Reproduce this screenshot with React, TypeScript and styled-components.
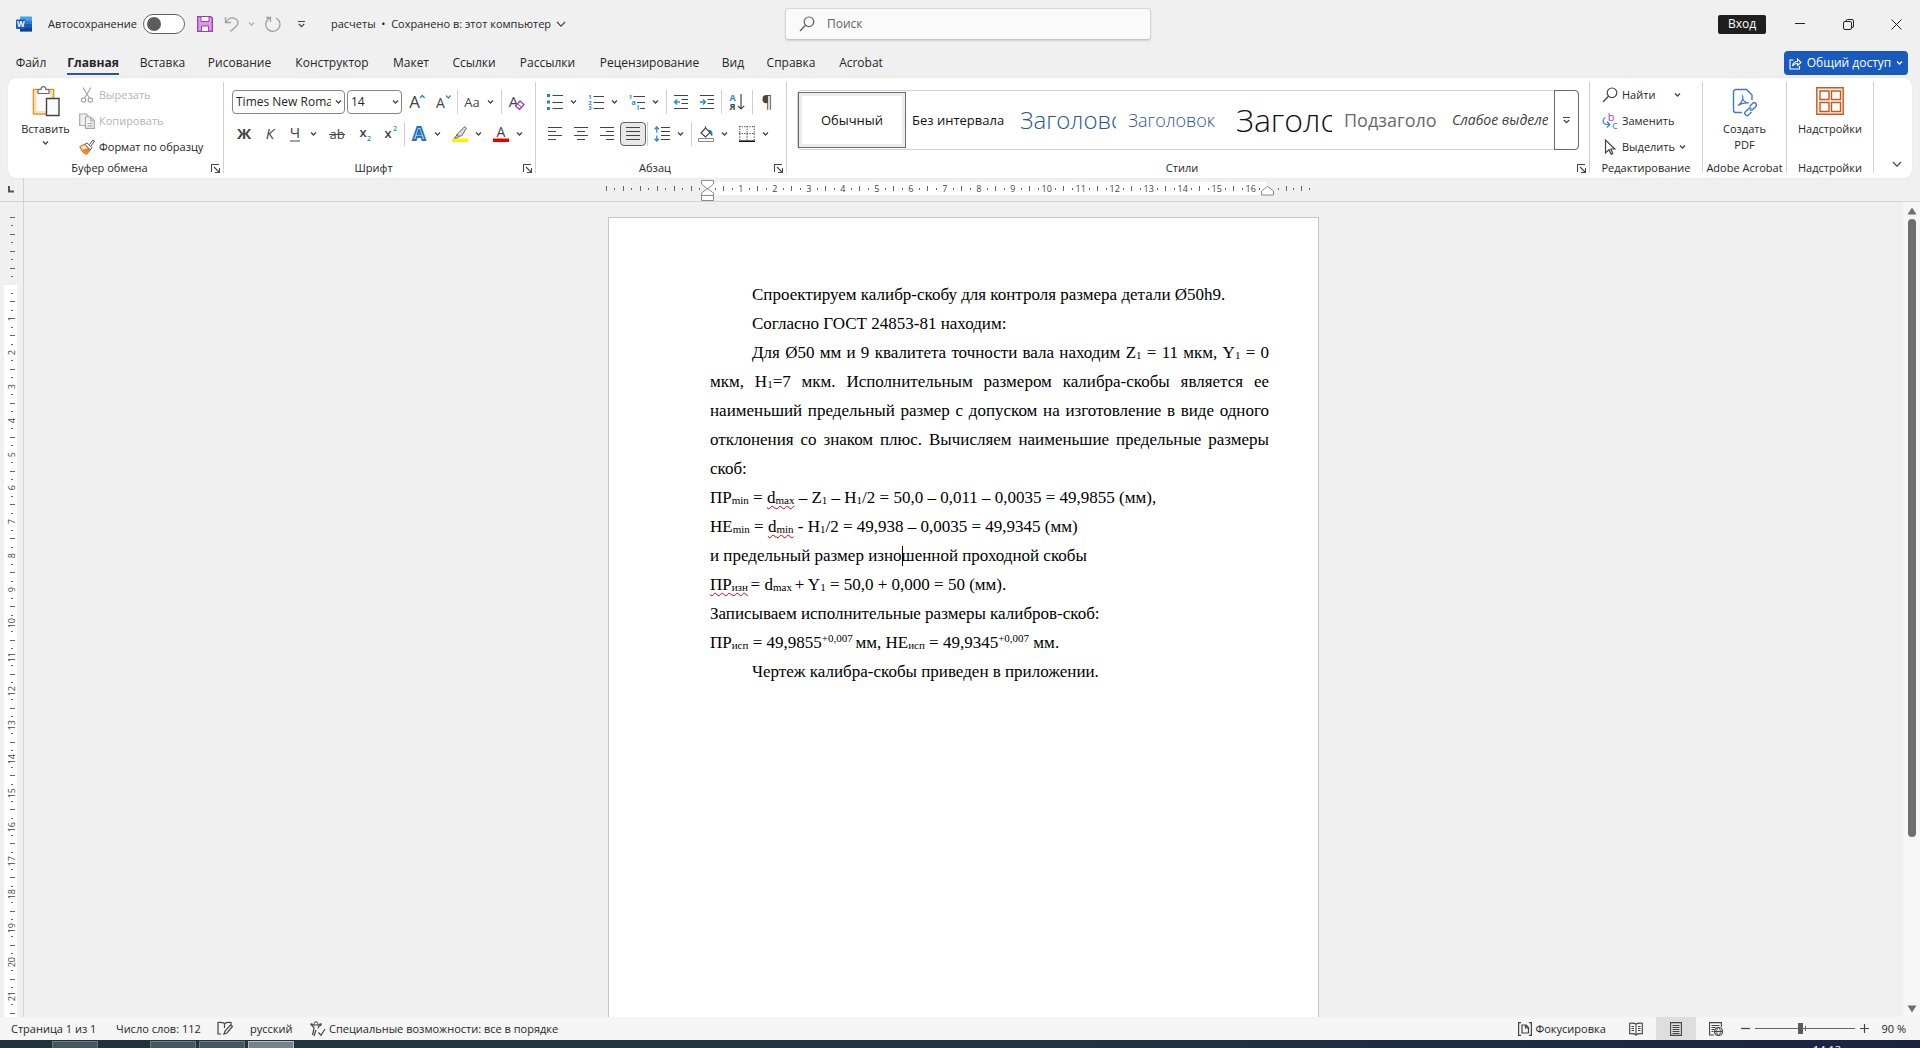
import React from "react";
import styled, { createGlobalStyle, css } from "styled-components";

const ui = `"Open Sans", "Noto Sans", sans-serif`;
const serif = `"Liberation Serif", "Times New Roman", serif`;
const ink = "#262626";
const line = "#444444";
const blue = "#2b88d8";

const Global = createGlobalStyle`
  *, *::before, *::after { box-sizing: border-box; }
  body { margin: 0; background: #f0f0f0; color: ${ink}; font-family: ${ui}; font-size: 12px; line-height: 16px; overflow: hidden; }
  button, input, select { font: inherit; color: inherit; }
  button { border: 0; background: none; padding: 0; }
`;

const Window = styled.div`
  height: 100vh;
  display: flex;
  flex-direction: column;
`;

/* ---------- title bar ---------- */
const TitleBar = styled.header`
  display: grid;
  grid-template-columns: 1fr 366px 1fr;
  height: 50px;
  flex: none;
  padding-left: 16px;
`;
const TitleSide = styled.div<{ $end?: boolean }>`
  display: flex;
  align-items: center;
  height: 48px;
  font-size: 11px;
  ${(p) => p.$end && css`justify-content: flex-end; font-size: 12px;`}
`;
const AutoSave = styled.label`
  display: flex;
  align-items: center;
  margin: 0 8px 0 16px;
  width: 137px;
  justify-content: space-between;
  white-space: nowrap;
`;
const Toggle = styled.input`
  appearance: none;
  flex: none;
  width: 42px;
  height: 20px;
  margin: 0;
  border: 1px solid #616161;
  border-radius: 10px;
  background: #fff;
  display: flex;
  align-items: center;
  padding-left: 3px;
  &::before { content: ""; width: 14px; height: 14px; border-radius: 50%; background: #5c5c5c; }
`;
const Quick = styled.button<{ $w?: number }>`
  width: ${(p) => p.$w ?? 24}px;
  height: 24px;
  display: flex;
  align-items: center;
  justify-content: center;
`;
const DocName = styled.button`
  display: flex;
  align-items: center;
  gap: 5px;
  margin-left: 18px;
  white-space: nowrap;
`;
const SearchBox = styled.label`
  display: flex;
  align-items: center;
  gap: 12px;
  height: 32px;
  margin-top: 8px;
  padding: 0 13px;
  background: #fafafa;
  border: 1px solid #d6d6d6;
  border-bottom-color: #c4c4c4;
  border-radius: 4px;
  box-shadow: 0 1px 2px rgba(0, 0, 0, 0.14);
`;
const SearchInput = styled.input`
  flex: 1;
  min-width: 0;
  border: 0;
  outline: 0;
  padding: 0;
  background: transparent;
  &::placeholder { color: #616161; opacity: 1; }
`;
const SignIn = styled.button`
  width: 48px;
  height: 19px;
  margin-right: 10px;
  background: #1f1f1f;
  color: #fff;
  border-radius: 2px;
`;
const WinButton = styled.button`
  width: 48px;
  height: 48px;
  display: flex;
  align-items: center;
  justify-content: center;
`;

/* ---------- tabs ---------- */
const TabRow = styled.nav`
  display: flex;
  flex: none;
  height: 28px;
  padding: 0 12px 0 5px;
`;
const Tab = styled.button<{ $w: number; $active?: boolean }>`
  width: ${(p) => p.$w}px;
  display: flex;
  justify-content: center;
  font-weight: ${(p) => (p.$active ? 700 : 400)};
  white-space: nowrap;
  span {
    height: 25px;
    padding-top: 5px;
    border-bottom: 2px solid ${(p) => (p.$active ? "#2b579a" : "transparent")};
  }
`;
const Share = styled.button`
  display: flex;
  align-items: center;
  justify-content: center;
  gap: 5px;
  width: 124px;
  height: 24px;
  margin: 1px 0 0 auto;
  border-radius: 4px;
  background: #185abd;
  color: #fff;
  white-space: nowrap;
`;

/* ---------- ribbon ---------- */
const Ribbon = styled.section`
  display: flex;
  flex: none;
  height: 100px;
  margin: 0 8px;
  background: #fff;
  border-radius: 8px;
  box-shadow: 0 0 1px rgba(0, 0, 0, 0.2);
`;
const Group = styled.div<{ $w?: number }>`
  ${(p) => (p.$w ? css`flex: 0 0 ${p.$w}px;` : css`flex: 1 1 0;`)}
  min-width: 0;
  display: flex;
  flex-direction: column;
  border-right: 1px solid;
  border-image: linear-gradient(transparent 5px, #d1d1d1 5px, #d1d1d1 94px, transparent 94px) 1;
`;
const Body = styled.div`
  height: 82px;
  display: flex;
  min-width: 0;
`;
const Foot = styled.div`
  display: flex;
  align-items: center;
  height: 16px;
  white-space: nowrap;
  font-size: 11px;
  span { flex: 1; text-align: center; }
`;
const Launcher = styled.button`
  width: 12px;
  height: 16px;
  display: flex;
  align-items: center;
`;
const Big = styled.button<{ $w: number; $lead?: number }>`
  width: ${(p) => p.$w}px;
  padding: 8px 0 0 ${(p) => p.$lead ?? 0}px;
  display: flex;
  flex-direction: column;
  align-items: center;
  gap: 3px;
  font-size: 11px;
`;
const BigIcon = styled.span`
  height: 32px;
  display: flex;
`;
const Stack = styled.div<{ $lead?: number }>`
  display: flex;
  flex-direction: column;
  padding: 4px 0 0 ${(p) => p.$lead ?? 0}px;
`;
const Small = styled.button<{ $off?: boolean }>`
  display: flex;
  align-items: center;
  gap: 4px;
  height: 26px;
  font-size: 11px;
  white-space: nowrap;
  color: ${(p) => (p.$off ? "#b5b5b5" : ink)};
`;
const SmallLabel = styled.span<{ $w?: number }>`
  text-align: left;
  ${(p) => p.$w && css`width: ${p.$w}px;`}
`;
const Rows = styled.div`
  display: flex;
  flex-direction: column;
  gap: 8px;
  padding: 12px 0 0 6px;
`;
const Row = styled.div<{ $inset?: boolean }>`
  display: flex;
  align-items: center;
  height: 24px;
  padding-left: ${(p) => (p.$inset ? 2 : 0)}px;
`;
const Combo = styled.label<{ $w: number }>`
  position: relative;
  width: ${(p) => p.$w}px;
  height: 24px;
  margin-right: 2px;
  select {
    appearance: none;
    width: 100%;
    height: 100%;
    padding: 0 13px 0 3px;
    border: 1px solid #868686;
    border-radius: 4px;
    background: #fff;
    text-overflow: clip;
  }
  svg { position: absolute; right: 3px; top: 9px; pointer-events: none; }
`;
const Tool = styled.button<{ $w: number; $on?: boolean }>`
  flex: none;
  width: ${(p) => p.$w}px;
  height: 24px;
  display: flex;
  align-items: center;
  justify-content: center;
  ${(p) => p.$on && css`background: #e8e8e8; border: 1px solid #616161; border-radius: 4px;`}
`;
const Split = styled.button`
  flex: none;
  width: 41px;
  height: 24px;
  display: flex;
  align-items: center;
  gap: 7px;
  padding-left: 5px;
`;
const Bar = styled.i`
  width: 1px;
  height: 24px;
  margin: 0 1px;
  background: #d1d1d1;
`;
const Gallery = styled.div`
  display: flex;
  flex: 1;
  min-width: 0;
  height: 60px;
  margin: 12px 10px 0;
  border: 1px solid #d1d1d1;
  border-radius: 4px;
`;
const StyleList = styled.div`
  flex: 1;
  min-width: 0;
  display: flex;
  align-items: center;
  overflow: hidden;
`;
const StyleItem = styled.button<{ $size: number; $color?: string; $on?: boolean; $light?: boolean; $italic?: boolean }>`
  flex: none;
  width: 108px;
  height: 56px;
  padding: 0 ${(p) => (p.$on ? 2 : 6)}px;
  font-size: ${(p) => p.$size}px;
  line-height: 40px;
  font-weight: ${(p) => (p.$light ? 300 : 400)};
  font-style: ${(p) => (p.$italic ? "italic" : "normal")};
  color: ${(p) => p.$color ?? "#111"};
  ${(p) => p.$on && css`border: 1px solid #6a6a6a; box-shadow: inset 0 0 0 3px #ececec;`}
  span {
    display: block;
    overflow: hidden;
    white-space: nowrap;
    text-align: ${(p) => (p.$on ? "center" : "left")};
  }
`;
const More = styled.button`
  width: 25px;
  margin: -1px;
  border: 1px solid #6a6a6a;
  border-radius: 0 4px 4px 0;
  display: flex;
  align-items: center;
  justify-content: center;
`;
const Collapse = styled.button`
  flex: none;
  width: 38px;
  display: flex;
  justify-content: center;
  padding: 83px 0 0 8px;
`;

/* ---------- rulers and canvas ---------- */
const RulerRow = styled.div`
  display: flex;
  flex: none;
  height: 24px;
  border-bottom: 1px solid #d4d4d4;
`;
const Corner = styled.div`
  width: 24px;
  border-right: 1px solid #d4d4d4;
  display: flex;
  padding: 8px 0 0 8px;
`;
const HRuler = styled.div`
  flex: 1;
  display: flex;
  justify-content: center;
  padding: 4px 29px 0 0;
  font-size: 9px;
  line-height: 13px;
  color: #444;
`;
const HSide = styled.div<{ $w: number; $pad: number }>`
  display: flex;
  width: ${(p) => p.$w}px;
  height: 13px;
  padding-right: ${(p) => p.$pad}px;
`;
const HMain = styled.div`
  position: relative;
  display: flex;
  width: 560px;
  height: 13px;
  padding: 0 4px;
  background: #fff;
`;
const HMark = styled.span`
  flex: 1 1 0;
  min-width: 0;
  display: flex;
  align-items: center;
  justify-content: center;
`;
const HTick = styled.i<{ $long?: boolean }>`
  width: 1px;
  height: ${(p) => (p.$long ? 5 : 2)}px;
  background: #666;
`;
const Marker = styled.div<{ $x: number; $y: number }>`
  position: absolute;
  left: ${(p) => p.$x}px;
  top: ${(p) => p.$y}px;
  display: flex;
`;
const Work = styled.div`
  flex: 1;
  min-height: 0;
  display: flex;
`;
const VRuler = styled.div`
  width: 24px;
  flex: none;
  display: flex;
  flex-direction: column;
  padding: 11px 6px 0 4px;
  border-right: 1px solid #d4d4d4;
  font-size: 9px;
  line-height: 12px;
  color: #444;
`;
const VTop = styled.div`
  height: 72px;
  flex: none;
  display: flex;
  flex-direction: column;
  padding-bottom: 4px;
`;
const VMain = styled.div`
  flex: 1;
  min-height: 0;
  display: flex;
  flex-direction: column;
  padding-top: 4px;
  background: #fff;
`;
const VMark = styled.span`
  flex: 1 1 0;
  min-height: 0;
  display: flex;
  align-items: center;
  justify-content: center;
  padding-left: 3px;
  b {
    flex: none;
    font-weight: 400;
    writing-mode: vertical-rl;
    transform: rotate(180deg);
  }
`;
const VTick = styled.i<{ $long?: boolean }>`
  height: 1px;
  width: ${(p) => (p.$long ? 5 : 2)}px;
  background: #666;
`;
const Canvas = styled.main`
  flex: 1;
  min-width: 0;
  display: flex;
  justify-content: center;
  padding-top: 15px;
  overflow: hidden;
`;
const Page = styled.article`
  width: 711px;
  height: 1006px;
  flex: none;
  padding: 62px 49px 0 101px;
  background: #fff;
  border: 1px solid #c6c6c6;
  font-family: ${serif};
  font-size: 17px;
  line-height: 29px;
  color: #000;
`;
const P = styled.p<{ $indent?: boolean }>`
  margin: 0;
  text-align: justify;
  text-indent: ${(p) => (p.$indent ? 42 : 0)}px;
`;
const Sub = styled.sub`
  font-size: 11px;
  line-height: 11px;
  vertical-align: -1px;
`;
const Sup = styled.sup`
  font-size: 11px;
  line-height: 11px;
  vertical-align: 6px;
`;
const Err = styled.span`
  text-decoration: underline wavy #e00000 1px;
  text-underline-offset: 2px;
  text-decoration-skip-ink: none;
`;
const Caret = styled.span`
  display: inline-block;
  width: 1px;
  height: 20px;
  margin-right: -1px;
  vertical-align: -5px;
  background: #000;
`;
const Scroll = styled.div`
  width: 17px;
  flex: none;
  display: flex;
  flex-direction: column;
  align-items: center;
  gap: 4px;
  padding: 5px 0 4px 0;
  background: #f6f6f6;
`;
const Track = styled.div`
  flex: 1;
  width: 8px;
`;
const Thumb = styled.div`
  height: 79%;
  border-radius: 4px;
  background: #6e6e6e;
`;

/* ---------- status bar ---------- */
const Status = styled.footer`
  flex: none;
  display: flex;
  align-items: center;
  height: 23px;
  padding: 0 14px 0 11px;
  background: #f5f5f5;
  font-size: 11px;
  white-space: nowrap;
`;
const Stat = styled.button<{ $w?: number }>`
  ${(p) => p.$w && css`width: ${p.$w}px;`}
  display: flex;
  align-items: center;
  gap: 3px;
`;
const StatusEnd = styled.div`
  display: flex;
  align-items: center;
  margin-left: auto;
`;
const View = styled.button<{ $on?: boolean }>`
  width: 40px;
  height: 23px;
  display: flex;
  align-items: center;
  justify-content: center;
  background: ${(p) => (p.$on ? "#dedede" : "none")};
`;
const Zoom = styled.input`
  appearance: none;
  width: 100px;
  height: 12px;
  margin: 0 5px;
  background: linear-gradient(#666, #666) center / 100% 1px no-repeat, linear-gradient(#666, #666) center / 1px 5px no-repeat;
  &::-webkit-slider-thumb { appearance: none; width: 5px; height: 11px; background: #5c5c5c; }
`;
const Taskbar = styled.div`
  flex: none;
  display: flex;
  align-items: flex-start;
  height: 8px;
  padding: 1px 79px 0 52px;
  overflow: hidden;
  background: linear-gradient(90deg, #20333a, #1f3544 50%, #1b2343);
`;
const Task = styled.span<{ $gap?: number; $on?: boolean }>`
  width: 46px;
  height: 10px;
  margin-right: ${(p) => p.$gap ?? 3}px;
  background: ${(p) => (p.$on ? "#74848a" : "#44575e")};
  border: 1px solid ${(p) => (p.$on ? "#b4bec2" : "#6a7c82")};
`;
const Clock = styled.time`
  margin: 2px 0 0 auto;
  color: #fff;
  font-size: 11px;
  line-height: 14px;
`;

/* ---------- icons ---------- */
type SvgP = { w?: number; h?: number; children: React.ReactNode };
const Svg = ({ w = 16, h = 16, children }: SvgP) => (
  <svg width={w} height={h} viewBox={`0 0 ${w} ${h}`} fill="none" stroke={line} strokeWidth="1" aria-hidden="true">
    {children}
  </svg>
);
const Chev = ({ c = line }: { c?: string }) => (
  <Svg w={7} h={6}><path d="M1 1.5 3.5 4 6 1.5" stroke={c} strokeWidth="1.3" /></Svg>
);
const BigChev = () => (<Svg w={10} h={7}><path d="M1 1 5 5.2 9 1" strokeWidth="1.2" /></Svg>);
const Drop = () => (<Svg w={9} h={8}><path d="M1 1.5h7M1.8 4 4.5 6.6 7.2 4" strokeWidth="1.2" /></Svg>);
const Glyph = ({ t, x = 8, y = 13, s = 15, c = line, ...rest }: any) => (
  <text x={x} y={y} fontSize={s} fill={c} stroke="none" textAnchor="middle" fontFamily={ui} {...rest}>{t}</text>
);
const WordLogo = () => (
  <Svg>
    <g stroke="none">
      <rect x="4" y="0.5" width="12" height="4" fill="#41a5ee" />
      <rect x="4" y="4.3" width="12" height="4" fill="#2b7cd3" />
      <rect x="4" y="8" width="12" height="4" fill="#185abd" />
      <rect x="4" y="11.8" width="12" height="3.8" fill="#103f91" />
      <rect x="0" y="3.5" width="9.5" height="9.5" rx="1" fill="#185abd" />
    </g>
    <Glyph t="W" x={4.8} y={11} s={8} c="#fff" fontWeight="700" />
  </Svg>
);
const SaveIcon = () => (
  <Svg><path d="M.7.7h13L15.3 2v13.3H.7z" fill="#dc9be6" stroke="#9a3fae" strokeWidth="1.3" /><path d="M4 1v4.5h8V1M4.5 15v-5h7v5" fill="#fff" stroke="#9a3fae" /></Svg>
);
const Undo = () => (<Svg><path d="M1.5 1v5.5H7M1.8 6.2C4 2.5 7.5 1.2 10.7 2.3c3.8 1.5 4.3 5.3 1.5 8L6.5 15.5" stroke="#a0a0a0" strokeWidth="1.3" /></Svg>);
const Redo = () => (<Svg><path d="M1 1.5h4.500V6M5.300 1.700C.5 4-.5 9.500 2.500 13c3 3.300 8.500 3 11-.3C16.200 9 15 4 11 2" stroke="#a0a0a0" strokeWidth="1.3" /></Svg>);
const Lens = ({ c = "#616161" }: { c?: string }) => (<Svg><circle cx="10" cy="5.8" r="4.8" stroke={c} strokeWidth="1.2" /><path d="M6.500 9.300 1 15" stroke={c} strokeWidth="1.3" /></Svg>);
const LaunchIcon = () => (<Svg w={9} h={9}><path d="M.5 8V.5H8M3 3l5 5M8.500 4v4.500H4" strokeWidth="1.1" /></Svg>);
const PasteIcon = () => (
  <Svg w={28} h={31}>
    <path d="M1.5 3.5h20v24.5h-20z" fill="#fff" stroke="#e8912d" strokeWidth="1.6" />
    <path d="M3.5 5.5h16v20.5h-16z" fill="#fafafa" stroke="#f8d9a0" strokeWidth="1.5" />
    <path d="M6 7.5V3.5h3C9.3 1.5 10 .7 11.5.7s2.2.8 2.5 2.8h3v4z" fill="#fff" stroke="#6a6a6a" strokeWidth="1.2" />
    <path d="M14.5 12.5H27v17H14.5z" fill="#fafafa" stroke="#444" strokeWidth="1.4" />
  </Svg>
);
const CutIcon = () => (<Svg><g stroke="#a8a8a8" strokeWidth="1.2"><path d="M4 .5 10.3 11M12 .5 5.7 11" /><circle cx="4.6" cy="13" r="2.2" /><circle cx="11.4" cy="13" r="2.2" /></g></Svg>);
const CopyIcon = () => (<Svg><g stroke="#a8a8a8" strokeWidth="1.2"><path d="M6 12.5H.7V1H7l2.5 2.5" fill="#f0f0f0" /><path d="M6.5 4h5l3.8 3.8v7.5H6.500z" fill="#f5f5f5" /><path d="M11.5 4v4h4M8.500 10.500h5M8.500 12.800h5" /></g></Svg>);
const BrushIcon = () => (<Svg><path d="M1 7.5 6.5 5l5 5.5-4 4.8C5 14.5 2.5 12 1 7.5z" fill="#fbe3c0" stroke="#e07a1f" strokeWidth="1.2" /><path d="M3 11 9 9l2 2-4 4z" fill="#e8872b" stroke="none" /><path d="M6 5.5 8 3.8l5 5-1.800 2zM10.500 5.500 14 1l1.500 1-3.500 5" fill="#fff" stroke="#555" /></Svg>);
const Grow = () => (<Svg w={18} h={18}><Glyph t="A" x={6.5} y={15} s={17} /><path d="m12 5 2.3-2.5L16.600 5" stroke={blue} strokeWidth="1.3" /></Svg>);
const Shrink = () => (<Svg w={18} h={18}><Glyph t="A" x={6.5} y={15} s={14} /><path d="m12 2.5 2.3 2.5 2.3-2.5" stroke={blue} strokeWidth="1.3" /></Svg>);
const ClearFmt = () => (<Svg w={18} h={18}><Glyph t="A" x={6.500} y={14} s={15} /><path d="m8.500 13 4.500-5 4 3.500-4.500 5z" fill="#fff" stroke="#a33cb8" strokeWidth="1.3" /><path d="m10.500 10.800 4 3.500" stroke="#a33cb8" /></Svg>);
const Strike = () => (<Svg w={18}><Glyph t="ab" x={9} y={12.5} s={13} /><path d="M1 8.500h16" /></Svg>);
const SubI = () => (<Svg w={18} h={20}><Glyph t="x" x={7} y={13} s={13} fontWeight="600" /><Glyph t="2" x={13} y={17} s={7} c={blue} fontWeight="600" /></Svg>);
const SupI = () => (<Svg w={18} h={20}><Glyph t="x" x={6} y={14} s={13} fontWeight="600" /><Glyph t="2" x={13} y={7} s={7} c={blue} fontWeight="600" /></Svg>);
const Effects = () => (<Svg><text x="8" y="14" fontSize="18" fontWeight="700" textAnchor="middle" fontFamily={ui} fill="#fff" stroke="#2373bf" strokeWidth="1.8">A</text></Svg>);
const Highlight = () => (<Svg><path d="M0 12.500h16V16H0z" fill="#fff200" stroke="none" /><path d="M6 7.500 12.500.8l2 1.500L9.500 10H5zM5 8l-1 2.500-2 1.500h3.500l2-2" fill="#ddd" stroke="#666" /></Svg>);
const FontColor = () => (<Svg><path d="M0 12.500h16V16H0z" fill="#e80000" stroke="none" /><Glyph t="A" y={11} s={14} /></Svg>);
const Bullets = () => (<Svg><path d="M0 0h3v3H0zM0 6.500h3v3H0zM0 13h3v3H0z" fill="#2b7cd3" stroke="none" /><path d="M5.500 1.500H16M5.500 8.500H16M5.500 14.500H16" /></Svg>);
const Numbers = () => (<Svg><path d="M5.500 2.500H16M5.500 8.500H16M5.500 14.500H16" />{["1", "2", "3"].map((n, i) => <Glyph key={n} t={n} x={2} y={5 + i * 5.5} s={6} c={blue} fontWeight="700" />)}</Svg>);
const Multi = () => (<Svg><path d="M4.500 2.500H16M8 8.500h8M11 14.500h5" /><Glyph t="1" x={1.500} y={5} s={6} c={blue} fontWeight="700" /><Glyph t="a" x={4.500} y={10.500} s={7} c={blue} fontWeight="700" /><Glyph t="i" x={9} y={16} s={7} c={blue} fontWeight="700" /></Svg>);
const Indent = ({ out }: { out?: boolean }) => (<Svg><path d="M1 1.500h14M8.500 5.500h6.500M8.500 9.500h6.500M1 14.500h14" /><path d={out ? "M7 8H1.500M4 5.500 1.500 8 4 10.500" : "M1 8h5.500M4 5.500 6.500 8 4 10.500"} stroke={blue} strokeWidth="1.3" /></Svg>);
const Sort = () => (<Svg w={18} h={18}><Glyph t="А" x={4.5} y={8} s={9} c={blue} fontWeight="700" /><Glyph t="Я" x={4.5} y={17} s={9} fontWeight="700" /><path d="M13 1v15M9.800 12.800 13 16l3.200-3.200" strokeWidth="1.2" /></Svg>);
const Lines = ({ a }: { a: "l" | "c" | "r" | "j" }) => {
  const short = { l: "M1 5.500h8M1 13.500h8", c: "M4 5.500h8M4 13.500h8", r: "M7 5.500h8M7 13.500h8", j: "M1 5.500h14M1 13.500h14" }[a];
  return <Svg><path d={`M1 1.500h14M1 9.500h14${short}`} strokeWidth="1.2" /></Svg>;
};
const Spacing = () => (<Svg><path d="M7 1.500h9M7 5.500h9M7 9.500h9M7 13.500h9" /><path d="M2.800 1v5.500M.6 3.200 2.800 1 5 3.200M2.800 15V9.500M.6 12.800 2.800 15 5 12.800" stroke={blue} strokeWidth="1.3" /></Svg>);
const Shade = () => (<Svg><path d="M.5 12.500h15v3H.5z" fill="#fff" stroke="#8a8a8a" /><path d="m3 7 4.500-5 4.500 4.500-4.500 4.500zM7.500 2V.3" strokeWidth="1.2" /><path d="M11.500 4.500c2-.5 2.500 2 2.500 5-1.500-1-2-3-2.500-5z" fill={blue} stroke="#1e5f9e" /></Svg>);
const Borders = () => (<Svg><path d="M.8 0v14M15.200 0v14M0 .7h16M8 0v14M0 7.500h16" strokeDasharray="1.3 1.3" /><path d="M0 15.200h16" stroke="#000" strokeWidth="1.5" /></Svg>);
const Replace = () => (<Svg><Glyph t="b" x={9} y={8} s={11} c="#a33cb8" /><Glyph t="c" x={13} y={15.500} s={11} c={blue} /><path d="M3.500 4.500C.5 5.500.3 10 3 11.200l4.500.3M5 8.500l2.800 3L5 14.500" stroke={blue} strokeWidth="1.2" /></Svg>);
const Pointer = () => (<Svg><path d="M3.500 1v13L7 10.800l2.200 4.500 1.600-.8L8.800 10h4z" strokeWidth="1.2" /></Svg>);
const Pdf = () => (
  <Svg w={28} h={31}>
    <g stroke="#3f76d6" strokeWidth="1.4">
      <path d="M11 26.500H5A2.500 2.500 0 0 1 2.500 24V6A2.500 2.500 0 0 1 5 3.500h10.500L21 9v5" />
      <path d="M7 19.500c3-1.500 6-7 4.500-9.500 0 4 2.500 7 6.500 7-4-.5-8 .3-11 2.500z" strokeWidth="1.2" />
      <path d="m18.500 20.500 3.500-3.500c1.200-1.200 4.600 1.200 3 3.200l-3.500 3.500c-1 1-2 .6-2.800 0M20.500 22.500c-1.200-1-2.200-.6-3 .3L14 26.300c-1.200 1.600 1.400 4.200 3.200 3l3.300-3.300" />
    </g>
  </Svg>
);
const AddIns = () => (
  <Svg w={28} h={30}><g stroke="#c55a1e" strokeWidth="1.4"><path d="M.8 1.800h26.400v26.400H.8z" fill="#fdf1e8" /><path d="M4 5h9v8.500H4zM15.500 5h9v8.500h-9zM4 16.500h9v9H4zM15.500 16.500h9v9h-9z" fill="#fff" /></g></Svg>
);
const ShareIcon = () => (<Svg w={13} h={13}><path d="M4.500 3H1v9h9.500V9M3.500 9c.5-3.500 3-4.500 5-4.500V2L12 5.500 8.500 8.500V6.500c-2 0-4 .8-5 2.500z" stroke="#fff" strokeWidth="1.1" /></Svg>);
const Proof = () => (<Svg><path d="M7.500 2.500C6 1.500 3 1.300 1 1.500v11.500h3M7.500 2.500C9 1.500 11 1.300 14 1.500V4M7.500 2.500V7M7 13l1-3 5.500-6 2 1.500-5.500 6.500z" strokeWidth="1.2" /></Svg>);
const Access = () => (<Svg><circle cx="6" cy="2.5" r="1.7" /><path d="M.8 3.500c2 2 3.200 1.500 3.200 4L2.500 14M11.500 3.500C9.500 5.300 8 5 8 7.500M.8 3.500C1 2 3 3.500 4.500 4.500M11.500 3.500C11 2 9 3.500 7.500 4.500M6 9l-2 6M8.500 11.500l2.500 2.800L15 8" strokeWidth="1.2" /></Svg>);
const Focus = () => (<Svg w={14} h={14}><path d="M3 .6H.6v12.800H3M11 .6h2.400v12.800H11M4 3h4l2.500 2.500V11H4zM7.500 3v3h3" strokeWidth="1.2" /></Svg>);
const Read = () => (<Svg w={14} h={14}><path d="M7 2C5.500 1 3 1 .7 1.200v10.600C3 11.500 5.500 11.600 7 13c1.500-1.400 4-1.500 6.300-1.200V1.200C11 1 8.500 1 7 2zv11M2.500 4.500H5M2.500 6.500H5M2.500 8.500H5M9 4.500h2.500M9 6.500h2.500M9 8.500h2.500" strokeWidth="1.1" /></Svg>);
const Print = () => (<Svg w={12} h={14}><path d="M.6.6h10.800v12.800H.6zM2.500 3.500h7M2.500 5.500h7M2.500 7.500h7M2.500 9.500h7M2.500 11.500h7" strokeWidth="1.1" /></Svg>);
const Web = () => (<Svg w={14} h={14}><path d="M5 13H.6V.6h11.800V5M2.500 3.500h8M2.500 5.500h4M2.500 7.500h3M2.500 9.500h2" strokeWidth="1.1" /><circle cx="9.5" cy="9.5" r="4" fill="#f5f5f5" strokeWidth="1.2" /><path d="M5.500 9.500h8M9.500 5.500c-2.500 2.500-2.500 5.500 0 8 2.500-2.500 2.500-5.500 0-8z" /></Svg>);

const TABS: [string, number][] = [
  ["Файл", 52], ["Главная", 72], ["Вставка", 67], ["Рисование", 87], ["Конструктор", 98], ["Макет", 60],
  ["Ссылки", 66], ["Рассылки", 81], ["Рецензирование", 123], ["Вид", 44], ["Справка", 72], ["Acrobat", 68],
];

const hMark = (q: number, numbered = true) => (
  <HMark key={q}>{numbered && q % 4 === 0 ? q / 4 : <HTick $long={q % 2 === 0} />}</HMark>
);
const vMark = (q: number, numbered = true) => (
  <VMark key={q}>{numbered && q % 4 === 0 ? <b>{q / 4}</b> : <VTick $long={q % 2 === 0} />}</VMark>
);
const range = (n: number, from = 1) => Array.from({ length: n }, (_, i) => i + from);

const Footer = ({ label, launch }: { label: string; launch?: boolean }) => (
  <Foot><span>{label}</span>{launch && <Launcher aria-label={label}><LaunchIcon /></Launcher>}</Foot>
);

export default function App() {
  return (
    <Window>
      <Global />
      <TitleBar>
        <TitleSide>
          <WordLogo />
          <AutoSave>Автосохранение<Toggle type="checkbox" role="switch" /></AutoSave>
          <Quick aria-label="Сохранить"><SaveIcon /></Quick>
          <Quick $w={30} aria-label="Отменить"><Undo /></Quick>
          <Quick $w={8} aria-label="Список отмены"><Chev c="#b0b0b0" /></Quick>
          <Quick $w={35} aria-label="Повторить"><Redo /></Quick>
          <Quick $w={23} aria-label="Настройка панели"><Drop /></Quick>
          <DocName>расчеты&nbsp; •&nbsp; Сохранено в: этот компьютер <BigChev /></DocName>
        </TitleSide>
        <SearchBox><Lens /><SearchInput type="search" placeholder="Поиск" /></SearchBox>
        <TitleSide $end>
          <SignIn>Вход</SignIn>
          <WinButton aria-label="Свернуть"><Svg w={10} h={10}><path d="M0 4.500h10" stroke="#222" /></Svg></WinButton>
          <WinButton aria-label="Восстановить"><Svg w={11} h={11}><path d="M3 2.500V2A1.500 1.500 0 0 1 4.500.5H9A1.500 1.500 0 0 1 10.500 2v5A1.500 1.500 0 0 1 9 8.500M.5 4A1.500 1.500 0 0 1 2 2.500h5A1.500 1.500 0 0 1 8.500 4v5A1.500 1.500 0 0 1 7 10.500H2A1.500 1.500 0 0 1 .5 9z" stroke="#222" /></Svg></WinButton>
          <WinButton aria-label="Закрыть"><Svg w={11} h={11}><path d="m.5.5 10 10M10.500.5l-10 10" stroke="#222" /></Svg></WinButton>
        </TitleSide>
      </TitleBar>

      <TabRow>
        {TABS.map(([t, w]) => <Tab key={t} $w={w} $active={t === "Главная"}><span>{t}</span></Tab>)}
        <Share><ShareIcon />Общий доступ<Chev c="#fff" /></Share>
      </TabRow>

      <Ribbon>
        <Group $w={216}>
          <Body>
            <Big $w={71} $lead={4}><BigIcon><PasteIcon /></BigIcon>Вставить<Chev /></Big>
            <Stack>
              <Small $off><CutIcon />Вырезать</Small>
              <Small $off><CopyIcon />Копировать</Small>
              <Small><BrushIcon />Формат по образцу</Small>
            </Stack>
          </Body>
          <Footer label="Буфер обмена" launch />
        </Group>

        <Group $w={312}>
          <Body>
            <Rows>
              <Row $inset>
                <Combo $w={113}><select aria-label="Шрифт"><option>Times New Roman</option></select><Chev /></Combo>
                <Combo $w={55}><select aria-label="Размер"><option>14</option></select><Chev /></Combo>
                <Tool $w={26} aria-label="Увеличить размер"><Grow /></Tool>
                <Tool $w={26} aria-label="Уменьшить размер"><Shrink /></Tool>
                <Bar />
                <Split aria-label="Регистр"><Svg><Glyph t="Aa" s={13} /></Svg><Chev /></Split>
                <Bar />
                <Tool $w={26} aria-label="Удалить форматирование"><ClearFmt /></Tool>
              </Row>
              <Row>
                <Tool $w={28} aria-label="Полужирный"><Svg><Glyph t="Ж" fontWeight="700" /></Svg></Tool>
                <Tool $w={24} aria-label="Курсив"><Svg><Glyph t="К" fontStyle="italic" /></Svg></Tool>
                <Split aria-label="Подчеркнутый"><Svg><Glyph t="Ч" y={12} /><path d="M3 15h10" /></Svg><Chev /></Split>
                <Tool $w={28} aria-label="Зачеркнутый"><Strike /></Tool>
                <Tool $w={28} aria-label="Подстрочный"><SubI /></Tool>
                <Tool $w={24} aria-label="Надстрочный"><SupI /></Tool>
                <Bar />
                <Split aria-label="Эффекты"><Effects /><Chev /></Split>
                <Split aria-label="Цвет выделения"><Highlight /><Chev /></Split>
                <Split aria-label="Цвет шрифта"><FontColor /><Chev /></Split>
              </Row>
            </Rows>
          </Body>
          <Footer label="Шрифт" launch />
        </Group>

        <Group $w={251}>
          <Body>
            <Rows>
              <Row>
                <Split aria-label="Маркеры"><Bullets /><Chev /></Split>
                <Split aria-label="Нумерация"><Numbers /><Chev /></Split>
                <Split aria-label="Многоуровневый список"><Multi /><Chev /></Split>
                <Bar />
                <Tool $w={26} aria-label="Уменьшить отступ"><Indent out /></Tool>
                <Tool $w={26} aria-label="Увеличить отступ"><Indent /></Tool>
                <Bar />
                <Tool $w={28} aria-label="Сортировка"><Sort /></Tool>
                <Bar />
                <Tool $w={26} aria-label="Знаки"><Svg><Glyph t="¶" s={17} y={13} /></Svg></Tool>
              </Row>
              <Row>
                <Tool $w={26} aria-label="По левому краю"><Lines a="l" /></Tool>
                <Tool $w={26} aria-label="По центру"><Lines a="c" /></Tool>
                <Tool $w={26} aria-label="По правому краю"><Lines a="r" /></Tool>
                <Tool $w={26} $on aria-label="По ширине"><Lines a="j" /></Tool>
                <Bar />
                <Split aria-label="Интервал"><Spacing /><Chev /></Split>
                <Bar />
                <Split aria-label="Заливка"><Shade /><Chev /></Split>
                <Split aria-label="Границы"><Borders /><Chev /></Split>
              </Row>
            </Rows>
          </Body>
          <Footer label="Абзац" launch />
        </Group>

        <Group>
          <Body>
            <Gallery>
              <StyleList>
                <StyleItem $size={13} $on><span>Обычный</span></StyleItem>
                <StyleItem $size={13}><span>Без интервала</span></StyleItem>
                <StyleItem $size={24} $light $color="#2f5496"><span>Заголовок 1</span></StyleItem>
                <StyleItem $size={18} $light $color="#2f5496"><span>Заголовок</span></StyleItem>
                <StyleItem $size={32} $light><span>Заголовок</span></StyleItem>
                <StyleItem $size={18} $color="#6a6a6a"><span>Подзаголо</span></StyleItem>
                <StyleItem $size={14} $italic $color="#404040"><span>Слабое выделение</span></StyleItem>
              </StyleList>
              <More aria-label="Дополнительные стили"><Drop /></More>
            </Gallery>
          </Body>
          <Footer label="Стили" launch />
        </Group>

        <Group $w={113}>
          <Body>
            <Stack $lead={12}>
              <Small><Lens c={line} /><SmallLabel $w={48}>Найти</SmallLabel><Chev /></Small>
              <Small><Replace />Заменить</Small>
              <Small><Pointer />Выделить<Chev /></Small>
            </Stack>
          </Body>
          <Footer label="Редактирование" />
        </Group>
        <Group $w={84}>
          <Body><Big $w={84}><BigIcon><Pdf /></BigIcon>Создать<br />PDF</Big></Body>
          <Footer label="Adobe Acrobat" />
        </Group>
        <Group $w={87}>
          <Body><Big $w={86}><BigIcon><AddIns /></BigIcon>Надстройки</Big></Body>
          <Footer label="Надстройки" />
        </Group>
        <Collapse aria-label="Свернуть ленту"><BigChev /></Collapse>
      </Ribbon>

      <RulerRow>
        <Corner><Svg w={6} h={7}><path d="M1 0v5.500h5" stroke="#555" strokeWidth="2" /></Svg></Corner>
        <HRuler>
          <HSide $w={105} $pad={3}>{range(12, -12).map((q) => hMark(q, false))}</HSide>
          <HMain>
            {range(65).map((q) => hMark(q))}
            <Marker $x={-6} $y={-2}><Svg w={13} h={21}><g fill="#fff" stroke="#8a8a8a"><path d="M.5.5h12V4l-6 5-6-5zM.5 15.500V13l6-4.500 6 4.500v2.500zM.5 15.500h12v5H.5z" /></g></Svg></Marker>
            <Marker $x={554} $y={4}><Svg w={13} h={10}><path d="M.5 9V5l6-4.500 6 4.500v4z" fill="#fff" stroke="#8a8a8a" /></Svg></Marker>
          </HMain>
          <HSide $w={46} $pad={0}><HMark />{range(5).map((q) => hMark(q, false))}</HSide>
        </HRuler>
      </RulerRow>

      <Work>
        <VRuler>
          <VTop>{range(8, -8).map((q) => vMark(q, false))}</VTop>
          <VMain>{range(86).map((q) => vMark(q))}</VMain>
        </VRuler>
        <Canvas>
          <Page>
            <P $indent>Спроектируем калибр-скобу для контроля размера детали Ø50h9.</P>
            <P $indent>Согласно ГОСТ 24853-81 находим:</P>
            <P $indent>
              Для Ø50 мм и 9 квалитета точности вала находим Z<Sub>1</Sub> = 11 мкм, Y<Sub>1</Sub> = 0 мкм, H<Sub>1</Sub>=7 мкм.
              Исполнительным размером калибра-скобы является ее наименьший предельный размер с допуском на изготовление
              в виде одного отклонения со знаком плюс. Вычисляем наименьшие предельные размеры скоб:
            </P>
            <P>ПР<Sub>min</Sub> = <Err>d<Sub>max</Sub></Err> – Z<Sub>1</Sub> – H<Sub>1</Sub>/2 = 50,0 – 0,011 – 0,0035 = 49,9855 (мм),</P>
            <P>НЕ<Sub>min</Sub> = <Err>d<Sub>min</Sub></Err> - H<Sub>1</Sub>/2 = 49,938 – 0,0035 = 49,9345 (мм)</P>
            <P>и предельный размер изно<Caret />шенной проходной скобы</P>
            <P><Err>ПР<Sub>изн</Sub></Err><Sub> </Sub>= d<Sub>max </Sub>+ Y<Sub>1</Sub> = 50,0 + 0,000 = 50 (мм).</P>
            <P>Записываем исполнительные размеры калибров-скоб:</P>
            <P>ПР<Sub>исп</Sub> = 49,9855<Sup>+0,007 </Sup>мм, НЕ<Sub>исп</Sub> = 49,9345<Sup>+0,007</Sup> мм.</P>
            <P $indent>Чертеж калибра-скобы приведен в приложении.</P>
          </Page>
        </Canvas>
        <Scroll>
          <Svg w={10} h={8}><path d="M5 .5 9.500 7.500H.5z" fill="#6e6e6e" stroke="none" /></Svg>
          <Track><Thumb /></Track>
          <Svg w={10} h={8}><path d="M5 7.500 9.500.5H.5z" fill="#6e6e6e" stroke="none" /></Svg>
        </Scroll>
      </Work>

      <Status>
        <Stat $w={105}>Страница 1 из 1</Stat>
        <Stat $w={101}>Число слов: 112</Stat>
        <Stat $w={33} aria-label="Правописание"><Proof /></Stat>
        <Stat $w={60}>русский</Stat>
        <Stat><Access />Специальные возможности: все в порядке</Stat>
        <StatusEnd>
          <Stat $w={98}><Focus />Фокусировка</Stat>
          <View aria-label="Режим чтения"><Read /></View>
          <View $on aria-label="Разметка страницы"><Print /></View>
          <View aria-label="Веб-документ"><Web /></View>
          <Stat $w={14} aria-label="Уменьшить"><Svg w={14} h={9}><path d="M5 4.500h9" strokeWidth="1.2" /></Svg></Stat>
          <Zoom type="range" min={10} max={190} defaultValue={90} aria-label="Масштаб" />
          <Stat $w={21} aria-label="Увеличить"><Svg w={9} h={9}><path d="M0 4.500h9M4.500 0v9" strokeWidth="1.2" /></Svg></Stat>
          <Stat>90 %</Stat>
        </StatusEnd>
      </Status>
      <Taskbar><Task $gap={52} /><Task /><Task /><Task $on /><Clock>14:13</Clock></Taskbar>
    </Window>
  );
}
